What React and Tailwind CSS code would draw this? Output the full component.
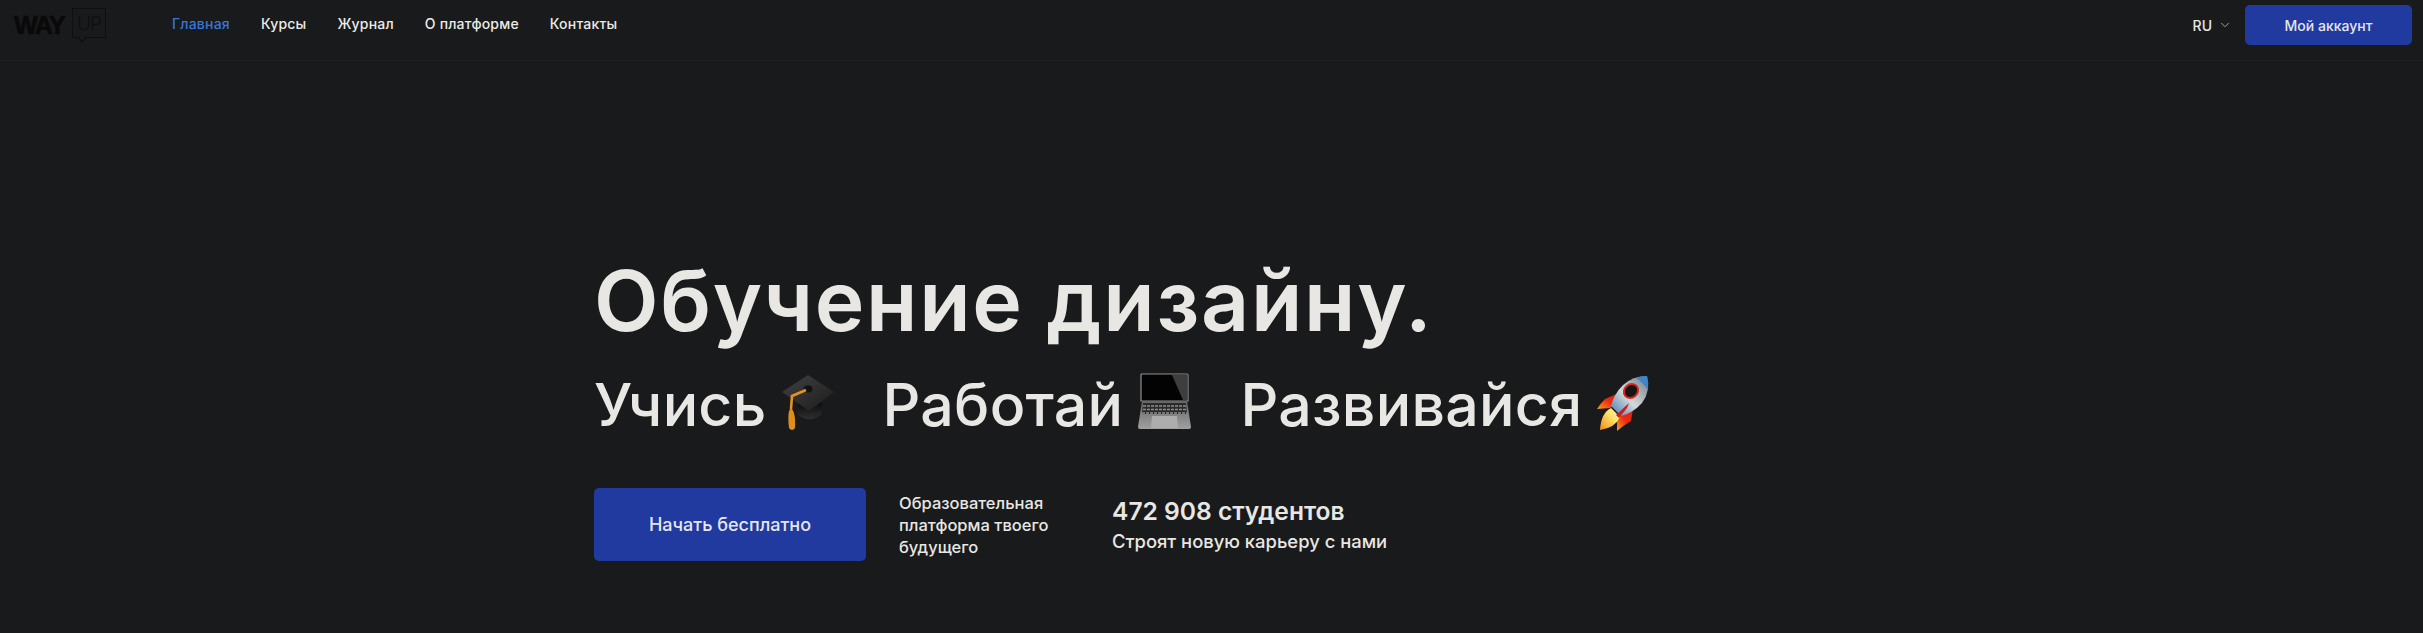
import React from "react";
import { ChevronDown } from "lucide-react";

const navItems = ["Главная", "Курсы", "Журнал", "О платформе", "Контакты"];

const CapIcon = () => (
  <svg viewBox="0 0 52 56" className="w-[52px] h-[56px]">
    <defs>
      <linearGradient id="capTop" x1="0" y1="0" x2="1" y2="1">
        <stop offset="0" stopColor="#414141" />
        <stop offset="1" stopColor="#1c1c1c" />
      </linearGradient>
      <linearGradient id="capBase" x1="0" y1="0" x2="0" y2="1">
        <stop offset="0" stopColor="#0b0b0b" />
        <stop offset="1" stopColor="#2f2f2f" />
      </linearGradient>
    </defs>
    <path d="M16 28 L16 40 Q28 49 40 39 L40 27 L28 34 Z" fill="url(#capBase)" />
    <path d="M0 17 L26 0 L52 17 L27 36 Z" fill="url(#capTop)" />
    <ellipse cx="26" cy="14" rx="4.5" ry="3.4" fill="#121212" />
    <path d="M24 15 L10 21 L9 34" stroke="#e0931e" strokeWidth="2.6" fill="none" />
    <path d="M9 33 Q5 36 7 53 Q10 57 13 53 Q14 37 9 33 Z" fill="#dd8e1c" />
  </svg>
);

const LaptopIcon = () => (
  <svg viewBox="0 0 53 58" className="w-[53px] h-[58px]">
    <defs>
      <linearGradient id="base" x1="0" y1="0" x2="0" y2="1">
        <stop offset="0" stopColor="#666666" />
        <stop offset="1" stopColor="#a0a0a0" />
      </linearGradient>
    </defs>
    <path d="M3 28 L3 2 Q3 1 4 1 L49 1 Q50 1 50 2 L50 28 Z" fill="#030303" stroke="#8f8f8f" strokeWidth="1.2" />
    <path d="M34 2 L49.4 2 L49.4 27 L45 27 Z" fill="#3e3e3e" />
    <path d="M4 28 L49 28 L53 54 Q53 56 51 56 L2 56 Q0 56 0 54 Z" fill="url(#base)" />
    <path d="M5 30 L48 30 L49 41 L4 41 Z" fill="#2b2b2b" />
    <path d="M5 33 L48 33 M5 36.5 L49 36.5 M4 40 L49 40" stroke="#8d8d8d" strokeWidth="1.4" strokeDasharray="3 1" />
    <path d="M14 43 L39 43 L40 55 L13 55 Z" fill="#adadad" />
  </svg>
);

const RocketIcon = () => (
  <svg viewBox="0 0 54 56" className="w-[54px] h-[56px]">
    <defs>
      <linearGradient id="body" x1="0" y1="1" x2="1" y2="0">
        <stop offset="0" stopColor="#3f78b4" />
        <stop offset="0.45" stopColor="#d5d8da" />
        <stop offset="1" stopColor="#6f7a82" />
      </linearGradient>
      <linearGradient id="flame" x1="0" y1="1" x2="1" y2="0">
        <stop offset="0" stopColor="#f08a12" />
        <stop offset="0.6" stopColor="#ffe36b" />
        <stop offset="1" stopColor="#fff3b5" />
      </linearGradient>
      <linearGradient id="fin" x1="0" y1="1" x2="1" y2="0">
        <stop offset="0" stopColor="#f7a21b" />
        <stop offset="0.5" stopColor="#ea2c12" />
        <stop offset="1" stopColor="#d81f12" />
      </linearGradient>
    </defs>
    <path d="M22 18 L8 24 Q4 28 0 34 L13 33 L22 27 Z" fill="url(#fin)" />
    <path d="M36 34 L34 46 Q27 50 20 56 L20 44 L28 35 Z" fill="url(#fin)" />
    <path d="M14 33 Q4 38 3 55 Q18 53 23 42 Z" fill="url(#flame)" />
    <path d="M50 1 Q36 1 26 10 Q17 19 14 31 L24 41 Q36 38 45 28 Q54 16 50 1 Z" fill="url(#body)" />
    <path d="M50 1 Q44 1 39 3 Q48 9 51 16 Q52 8 50 1 Z" fill="#3f86c6" />
    <ellipse cx="34" cy="16" rx="7.5" ry="6.5" transform="rotate(-40 34 16)" fill="#151515" stroke="#d8261a" strokeWidth="2" />
    <path d="M19 40 L32 28 L30 33 L22 43 Z" fill="#c9211a" />
  </svg>
);

const Logo = () => (
  <div className="flex items-start w-[92px] h-[42px] pt-[3px]">
    <span className="w-[58px] text-[25px] leading-[24px] font-bold text-[#09090a] tracking-[-1.5px] [-webkit-text-stroke:0.6px_#09090a] [font-family:'Liberation_Sans',sans-serif] mt-[5px]">
      WAY
    </span>
    <div className="relative w-[34px] h-[30px] border border-[#0f0f10] flex items-center justify-center">
      <span className="text-[19px] font-light text-[#0f0f10] tracking-[-1px] leading-none">UP</span>
      <span className="absolute -bottom-[4px] left-[6px] w-[6px] h-[6px] border-r border-b border-[#0f0f10] bg-[#191a1c] rotate-45" />
    </div>
  </div>
);

const Word = ({ text, children }) => (
  <div className="flex items-end gap-[15px]">
    <span>{text}</span>
    <div className="mb-[11px]">{children}</div>
  </div>
);

export default function App() {
  return (
    <div className="min-h-[633px] bg-[#191a1c] text-[#e8e7e3] [font-family:Inter,sans-serif] overflow-hidden">
      <header className="h-[61px] border-b border-[#1f2023] flex items-start pl-[14px] pr-[11px] pt-[5px]">
        <Logo />
        <nav className="flex gap-[31px] ml-[66px] mt-[11px] text-[14px] leading-[16px] font-medium tracking-[0.2px] text-[#ecebe6]">
          {navItems.map((item, i) => (
            <a key={item} className={i === 0 ? "text-[#3a76d6]" : ""}>
              {item}
            </a>
          ))}
        </nav>
        <div className="ml-auto flex items-center">
          <span className="text-[14px] font-medium">RU</span>
          <ChevronDown className="w-[14px] h-[14px] ml-[6px] mr-[13px] text-[#b0b0b0]" strokeWidth={1.5} />
          <button className="w-[167px] h-[40px] rounded-[5px] bg-[#213a9f] text-[14px] font-medium text-[#e6e6ec]">
            Мой аккаунт
          </button>
        </div>
      </header>

      <main className="pl-[594px] pt-[190px]">
        <h1 className="text-[84px] leading-[100px] font-semibold tracking-[1.7px]">Обучение дизайну.</h1>
        <div className="flex gap-[49px] mt-[17px] text-[59px] leading-[74px] font-medium tracking-[0.25px]">
          <Word text="Учись"><CapIcon /></Word>
          <Word text="Работай"><LaptopIcon /></Word>
          <Word text="Развивайся"><RocketIcon /></Word>
        </div>
        <div className="flex items-center mt-[46px]">
          <button className="w-[272px] h-[73px] rounded-[5px] bg-[#213a9f] text-[18px] font-medium text-[#e6e6ec]">
            Начать бесплатно
          </button>
          <p className="w-[172px] ml-[33px] text-[16.5px] leading-[22px] font-medium">
            Образовательная платформа твоего будущего
          </p>
          <div className="ml-[41px]">
            <div className="text-[24.6px] leading-[30px] font-semibold">472 908 студентов</div>
            <div className="text-[18.4px] leading-[26px] font-medium mt-[2px]">Строят новую карьеру с нами</div>
          </div>
        </div>
      </main>
    </div>
  );
}
